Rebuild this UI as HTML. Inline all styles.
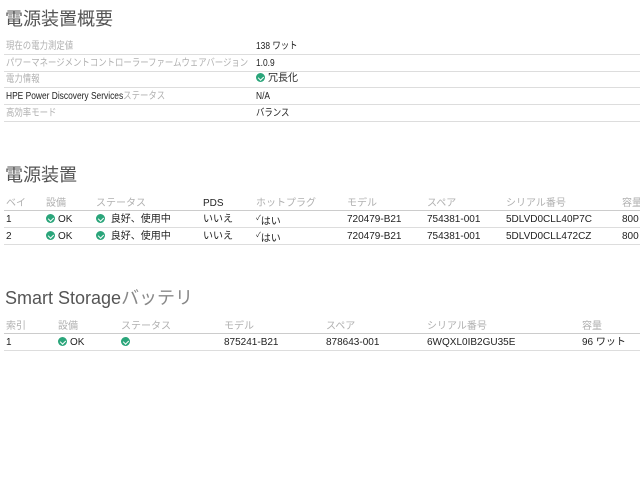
<!DOCTYPE html>
<html><head><meta charset="utf-8"><style>
body{margin:0;width:640px;height:480px;background:#fff;overflow:hidden;font-family:"Liberation Sans","Noto Sans CJK JP",sans-serif;font-size:10px;color:#222;position:relative}
.a{position:absolute;white-space:nowrap;line-height:12px}
.c{transform:scaleX(.84);transform-origin:0 50%}
.h{position:absolute;font-size:18px;color:#555;line-height:20px;white-space:nowrap}
.l{position:absolute;left:4px;height:1px;background:#ddd}
.g{color:#b0b0b0}
.i{display:inline-block;width:9px;height:9px;border-radius:50%;background:#2aa57a;vertical-align:-1px;margin-right:3px;position:relative}
.i:after{content:"";position:absolute;left:2.5px;top:1.5px;width:2.5px;height:4px;border:solid #fff;border-width:0 1.3px 1.3px 0;transform:rotate(45deg)}
</style></head><body>
<div class="h" style="left:5px;top:9px">電源装置概要</div>
<div class="a g c" style="left:6px;top:41px">現在の電力測定値</div><div class="a c" style="left:256px;top:41px">138 ワット</div>
<div class="l" style="top:54px;width:636px"></div>
<div class="a g c" style="left:6px;top:58px">パワーマネージメントコントローラーファームウェアバージョン</div><div class="a c" style="left:256px;top:58px">1.0.9</div>
<div class="l" style="top:71px;width:636px"></div>
<div class="a g c" style="left:6px;top:74px">電力情報</div><div class="a" style="left:256px;top:73px"><span class="i"></span>冗長化</div>
<div class="l" style="top:87px;width:636px"></div>
<div class="a c" style="left:6px;top:91px">HPE Power Discovery Services<span class="g">ステータス</span></div><div class="a c" style="left:256px;top:91px">N/A</div>
<div class="l" style="top:104px;width:636px"></div>
<div class="a g c" style="left:6px;top:108px">高効率モード</div><div class="a c" style="left:256px;top:108px">バランス</div>
<div class="l" style="top:121px;width:636px"></div>

<div class="h" style="left:5px;top:165px">電源装置</div>
<div class="a g" style="left:6px;top:198px">ベイ</div><div class="a g" style="left:46px;top:198px">設備</div><div class="a g" style="left:96px;top:198px">ステータス</div><div class="a" style="left:203px;top:198px">PDS</div><div class="a g" style="left:256px;top:198px">ホットプラグ</div><div class="a g" style="left:347px;top:198px">モデル</div><div class="a g" style="left:427px;top:198px">スペア</div><div class="a g" style="left:506px;top:198px">シリアル番号</div><div class="a g" style="left:622px;top:198px">容量</div>
<div class="l" style="top:210px;width:636px;background:#ccc"></div>
<div class="a" style="left:6px;top:214px">1</div><div class="a" style="left:46px;top:214px"><span class="i"></span>OK</div><div class="a" style="left:96px;top:214px"><span class="i"></span> 良好、使用中</div><div class="a" style="left:203px;top:214px">いいえ</div><div class="a" style="left:256px;top:213px"><sup style="font-size:7px">✓</sup>はい</div><div class="a" style="left:347px;top:214px">720479-B21</div><div class="a" style="left:427px;top:214px">754381-001</div><div class="a" style="left:506px;top:214px">5DLVD0CLL40P7C</div><div class="a" style="left:622px;top:214px">800</div>
<div class="l" style="top:227px;width:636px"></div>
<div class="a" style="left:6px;top:231px">2</div><div class="a" style="left:46px;top:231px"><span class="i"></span>OK</div><div class="a" style="left:96px;top:231px"><span class="i"></span> 良好、使用中</div><div class="a" style="left:203px;top:231px">いいえ</div><div class="a" style="left:256px;top:230px"><sup style="font-size:7px">✓</sup>はい</div><div class="a" style="left:347px;top:231px">720479-B21</div><div class="a" style="left:427px;top:231px">754381-001</div><div class="a" style="left:506px;top:231px">5DLVD0CLL472CZ</div><div class="a" style="left:622px;top:231px">800</div>
<div class="l" style="top:244px;width:636px"></div>

<div class="h" style="left:5px;top:288px">Smart Storage<span style="color:#888">バッテリ</span></div>
<div class="a g" style="left:6px;top:321px">索引</div><div class="a g" style="left:58px;top:321px">設備</div><div class="a g" style="left:121px;top:321px">ステータス</div><div class="a g" style="left:224px;top:321px">モデル</div><div class="a g" style="left:326px;top:321px">スペア</div><div class="a g" style="left:427px;top:321px">シリアル番号</div><div class="a g" style="left:582px;top:321px">容量</div>
<div class="l" style="top:333px;width:636px;background:#ccc"></div>
<div class="a" style="left:6px;top:337px">1</div><div class="a" style="left:58px;top:337px"><span class="i"></span>OK</div><div class="a" style="left:121px;top:337px"><span class="i"></span></div><div class="a" style="left:224px;top:337px">875241-B21</div><div class="a" style="left:326px;top:337px">878643-001</div><div class="a" style="left:427px;top:337px">6WQXL0IB2GU35E</div><div class="a" style="left:582px;top:337px">96 ワット</div>
<div class="l" style="top:350px;width:636px"></div>
</body></html>
